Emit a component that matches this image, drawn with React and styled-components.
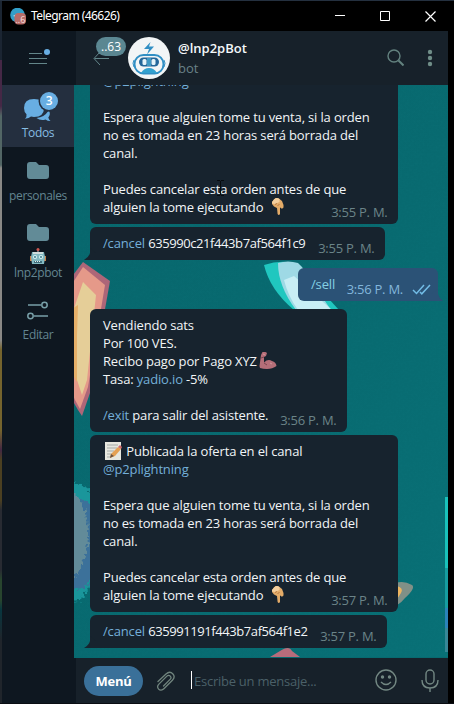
import React from "react";
import styled, { createGlobalStyle } from "styled-components";

const GlobalStyle = createGlobalStyle`
  * { box-sizing: border-box; }
  body { margin: 0; background: #000; font-family: "Open Sans", sans-serif; font-size: 13px; overflow: hidden; }
`;

const Desktop = styled.div`
  width: 454px;
  height: 704px;
  padding: 1px 6px 1px 2px;
  background: linear-gradient(#24303f 0 1px, transparent 1px 703px, #0a0d12 703px),
    linear-gradient(90deg, transparent 2px, #000 2px),
    linear-gradient(#1b2532 0 60px, #452846 60px 106px, #526665 116px 165px, #8a8986 168px 340px, #75642d 350px 430px, #432842 450px, #4b4021 460px 500px, #282b32 510px 570px, #28452e 580px 600px, #08363f 610px, #20252b 640px);
`;
const Window = styled.div`
  width: 446px;
  height: 702px;
  display: flex;
  flex-direction: column;
  background: #0e1720;
`;
const TitleBar = styled.header`
  height: 30px;
  flex: none;
  display: flex;
  align-items: center;
  padding-left: 8px;
  background: #000;
  color: #fff;
`;
const Title = styled.span`
  font: 12px/18px "Noto Sans", sans-serif;
  letter-spacing: -0.55px;
  margin-left: 4px;
  flex: 1;
`;
const WindowButton = styled.span`
  width: 45px;
  display: flex;
  justify-content: center;
  &:last-child { width: 41px; justify-content: flex-start; padding-left: 18px; }
`;
const Body = styled.div`
  flex: 1;
  min-height: 0;
  display: flex;
`;
const Sidebar = styled.nav`
  width: 72px;
  flex: none;
  display: flex;
  flex-direction: column;
`;
const MenuButton = styled.div`
  height: 54px;
  padding: 16px 0 0 26px;
`;
const Folder = styled.div`
  height: ${(p) => p.$height || 62}px;
  display: flex;
  flex-direction: column;
  align-items: center;
  padding-top: ${(p) => p.$top || 13}px;
  background: ${(p) => (p.$active ? "#242f3f" : "transparent")};
  color: ${(p) => (p.$active ? "#86bce2" : "#638590")};
  font-size: 12px;
  line-height: 16px;
  letter-spacing: -0.35px;
`;
const FolderIconBox = styled.span`
  position: relative;
  height: 26px;
  svg { display: block; }
`;
const FolderBadge = styled.span`
  position: absolute;
  top: -7px;
  left: 16px;
  width: 18px;
  height: 18px;
  border-radius: 9px;
  background: #68aee2;
  box-shadow: 0 0 0 1.5px #242f3f;
  color: #fff;
  font: 600 12px/18px "Open Sans", sans-serif;
  text-align: center;
`;
const EmojiLine = styled.span`
  height: 16px;
  margin-top: -2px;
  margin-bottom: 1px;
  svg { display: block; }
`;
const Chat = styled.main`
  flex: 1;
  min-width: 0;
  display: flex;
  flex-direction: column;
`;
const ChatHeader = styled.div`
  height: 54px;
  margin-left: 2px;
  flex: none;
  display: flex;
  align-items: center;
  background: #17212a;
`;
const Back = styled.div`
  position: relative;
  width: 52px;
  height: 54px;
  padding: 20px 0 0 17px;
`;
const UnreadPill = styled.span`
  position: absolute;
  top: 6px;
  left: 20px;
  width: 30px;
  height: 19px;
  border-radius: 10px;
  background: #5b8792;
  color: #fff;
  font: 12px/19px "Open Sans", sans-serif;
  text-align: center;
`;
const Peer = styled.div`
  flex: 1;
  margin-left: 8px;
  padding-bottom: 1px;
`;
const PeerName = styled.div`
  color: #f4f8fa;
  font-weight: 600;
  line-height: 20px;
`;
const PeerStatus = styled.div`
  color: #6a8288;
  line-height: 20px;
`;
const HeaderActions = styled.div`
  display: flex;
  align-items: center;
  gap: 23px;
  padding: 0 15px 1px 0;
`;
const History = styled.section`
  position: relative;
  isolation: isolate;
  flex: 1;
  min-height: 0;
  overflow: hidden;
  display: flex;
  flex-direction: column;
  justify-content: flex-end;
  align-items: flex-start;
  padding: 0 10px 10px 16px;
  background: #076a70;
`;
const Wallpaper = styled.svg`
  position: absolute;
  inset: 0;
  z-index: -1;
`;
const Bubble = styled.article`
  position: relative;
  flex: none;
  width: ${(p) => p.$width}px;
  margin-top: ${(p) => p.$gap || 3}px;
  align-self: ${(p) => (p.$out ? "flex-end" : "flex-start")};
  padding: 7px 13px 8px;
  border-radius: 6px;
  background: ${(p) => (p.$out ? "#2b5276" : "#17232e")};
  color: ${(p) => (p.$out ? "#83d0e4" : "#f2f5f7")};
`;
const Line = styled.div`
  height: 18px;
  line-height: 18px;
  white-space: pre;
  letter-spacing: -0.15px;
  svg { vertical-align: top; }
`;
const Link = styled.span`
  color: #74afd9;
`;
const OrderId = styled.span`
  letter-spacing: -0.42px;
`;
const Time = styled.time`
  position: absolute;
  right: ${(p) => (p.$out ? 35 : 10.5)}px;
  bottom: 3px;
  line-height: 18px;
  letter-spacing: -0.25px;
  color: ${(p) => (p.$out ? "#83b7dc" : "#6b8488")};
  white-space: pre;
`;
const Tail = styled.svg`
  position: absolute;
  bottom: 0;
  ${(p) => (p.$out ? "right: -5px;" : "left: -6px;")}
`;
const Checks = styled.svg`
  position: absolute;
  right: 7px;
  bottom: 6px;
`;
const Composer = styled.footer`
  height: 45px;
  flex: none;
  margin-left: 2px;
  display: flex;
  align-items: center;
  padding: 1px 8px 0 8px;
  background: #17212a;
`;
const MenuPill = styled.button`
  width: 59px;
  height: 30px;
  border: 0;
  border-radius: 15px;
  padding: 0;
  background: #3a7099;
  color: #fff;
  font: 700 13px/28px "Open Sans", sans-serif;
  letter-spacing: -0.3px;
`;
const Attach = styled.span`
  display: flex;
  margin: 2px 0 0 12px;
`;
const Input = styled.div`
  flex: 1;
  display: flex;
  align-items: center;
  margin-left: 15px;
  color: #4b6068;
  letter-spacing: -0.25px;
  white-space: nowrap;
`;
const Caret = styled.span`
  width: 1px;
  height: 18px;
  background: #fff;
  margin: 0 2px 2px 0;
`;
const ComposerActions = styled.span`
  display: flex;
  gap: 23px;
`;
const EmojiSlot = styled.span`
  display: inline-block;
  height: 18px;
  margin-left: ${(p) => p.$gap}px;
`;

const PointDown = () => (
  <svg width="18" height="18" viewBox="0 0 18 18">
    <path d="M3 1.500q2.500-2.500 5.500-.5l2.500 2 1.500 4v2.500q-1.500 2-2.500 .5l-1-.5v6.500q-1.200 2-2.400 0L6 10 3 8.500 1 6V4z" fill="#e3ab68" />
    <path d="M3 1.500q2.500-2.500 5.500-.5v3L4 6 1 5.500V4z" fill="#f4cf9e" />
    <path d="M4 6.500l2-1M6.500 8l2-2" stroke="#b57843" fill="none" />
  </svg>
);
const Biceps = () => (
  <svg width="18" height="18" viewBox="0 0 18 18">
    <path d="M3.500 0q3.500-.5 4.500 1L7 4 5 5v5.500q4-4 8-1.500 4 1 4.500 5-4 3-9.500 3-4 0-7-1L.5 14 2 3z" fill="#b56e78" />
    <path d="M2 6l3-1M5 11l3 2" stroke="#7b4550" fill="none" />
    <path d="M4 2l2 1M11 11l2 1" stroke="#d2959a" fill="none" />
  </svg>
);
const Memo = () => (
  <svg width="20" height="18" viewBox="0 0 20 18">
    <path d="M2 0h16v18H2z" fill="#e6e7df" />
    <path d="M4 3h11M4 6h10M4 9h7M4 12h5M4 15h4" stroke="#a5aaa7" fill="none" />
    <path d="M8 12l7-7 3 2-6 7-5 2z" fill="#e5a153" />
    <path d="M15 5l2-2 2 2-1 2z" fill="#cf6969" />
    <path d="M8 12l3 2-4 2z" fill="#6c5442" />
  </svg>
);
const Robot = () => (
  <svg width="16" height="16" viewBox="0 0 16 16">
    <path d="M8 2v3" stroke="#c0c8cc" />
    <circle cx="8" cy="1.5" r="1.5" fill="#cf5750" />
    <path d="M0 8h2v5H0zM14 8h2v5h-2z" fill="#c8814b" />
    <path d="M2 4h12l1 5-1 7H2L1 9z" fill="#83b9c1" />
    <path d="M3 4h10v2H3z" fill="#cfdddd" />
    <circle cx="5" cy="9" r="2" fill="#d9f6f5" /><circle cx="11" cy="9" r="2" fill="#d9f6f5" />
    <circle cx="5" cy="9" r=".9" fill="#326d80" /><circle cx="11" cy="9" r=".9" fill="#326d80" />
    <path d="M4 13h8v2H4z" fill="#416f7c" /><path d="M5 13.5h1m1 0h1m1 0h1" stroke="#e8eeee" />
  </svg>
);
const AppIcon = () => (
  <svg width="17" height="17" viewBox="0 0 17 17">
    <circle cx="7.5" cy="7" r="7.3" fill="#329ec8" />
    <path d="M3 8l4-2v3" fill="#e6f4fa" />
    <rect x="4.500" y="5" width="11.500" height="11.500" rx="4" fill="#b66c69" />
    <text x="5.500" y="14.5" fontSize="9" fill="#f4dede" fontFamily="Open Sans, sans-serif">..6</text>
  </svg>
);
const BotAvatar = () => (
  <svg width="42" height="42" viewBox="0 0 42 42">
    <circle cx="21" cy="21" r="21" fill="#f2f5f6" />
    <path d="M22.500 5L16 12h5l-2 5.500 7-8h-5z" fill="#318fc4" />
    <rect x="6.5" y="18" width="29" height="18.500" rx="9" fill="#f2f5f6" stroke="#318fc4" strokeWidth="2" />
    <path d="M6 23q-2 3 0 7M36 23q2 3 0 7" stroke="#318fc4" fill="none" />
    <rect x="11" y="20.5" width="20" height="9" rx="4.5" fill="#24679a" />
    <rect x="14.500" y="22" width="4" height="6" rx="1.5" fill="#e4f4fa" /><rect x="23.500" y="22" width="4" height="6" rx="1.5" fill="#e4f4fa" />
    <path d="M19 21h4v8h-4z" fill="#3e98c3" />
    <path d="M13 36q3-5 8-5t8 5z" fill="#32a1cf" />
  </svg>
);
const FolderIcon = () => (
  <svg width="22" height="18" viewBox="0 0 22 18"><path d="M3 0h6l3 3h7q3 0 3 3v8q0 3-3 3H3q-3 0-3-3V3q0-3 3-3z" fill="#628b97" /></svg>
);

const Message = ({ width, time, gap, out, tail, children }) => (
  <Bubble $width={width} $gap={gap} $out={out}>
    {children}
    <Time $out={out}>{time}</Time>
    {tail && (
      <Tail $out={out} width="12" height="12" viewBox="0 0 12 12">
        <path d={out ? "M7 0v5q1 4 5 7H0V5z" : "M6 0v5q-1 4-6 7h12V5z"} fill={out ? "#2b5276" : "#17232e"} />
      </Tail>
    )}
    {out && (
      <Checks width="19" height="12" viewBox="0 0 19 12">
        <path d="M1 7l3.5 3.5L12 2M8 9l1.8 1.8L18 2" fill="none" stroke="#72bce6" strokeWidth="1.5" />
      </Checks>
    )}
  </Bubble>
);
const OfferMessage = ({ time, continued }) => (
  <Message width={308} time={time}>
    {!continued && <Line><Memo /> Publicada la oferta en el canal</Line>}
    <Line><Link>@p2plightning</Link></Line>
    <Line />
    <Line>Espera que alguien tome tu venta, si la orden</Line>
    <Line>no es tomada en 23 horas será borrada del</Line>
    <Line>canal.</Line>
    <Line />
    <Line>Puedes cancelar esta orden antes de que</Line>
    <Line>alguien la tome ejecutando<EmojiSlot $gap={8}><PointDown /></EmojiSlot></Line>
  </Message>
);
const MouseCursor = styled.svg`
  position: absolute;
  left: 143px;
  top: 95px;
`;

const ChatWallpaper = () => (
  <Wallpaper width="374" height="572" viewBox="0 0 374 572">
    <defs>
      <linearGradient id="sea" x1="0" y1="0" x2="1" y2="1">
        <stop stopColor="#07666c" /><stop offset=".55" stopColor="#086a70" /><stop offset="1" stopColor="#087076" />
      </linearGradient>
      <filter id="grain"><feTurbulence type="fractalNoise" baseFrequency=".45" numOctaves="2" /><feColorMatrix values="0 0 0 0 .02 0 0 0 0 .3 0 0 0 0 .33 0 .8 0 0 -.25" /></filter>
      <filter id="ragged" colorInterpolationFilters="sRGB"><feTurbulence type="fractalNoise" baseFrequency=".35" numOctaves="1" /><feDisplacementMap in="SourceGraphic" scale="10" xChannelSelector="R" yChannelSelector="G" /></filter>
      <filter id="soft"><feGaussianBlur stdDeviation=".7" /></filter>
    </defs>
    <path d="M0 0h374v572H0z" fill="url(#sea)" />
    <path d="M0 0h374v572H0z" filter="url(#grain)" opacity=".12" />
    <g filter="url(#soft)">
      <path d="M-4 194l13-17 27 19-3 17-17 95-8 23-4-6-8-14z" fill="#ad6678" />
      <path d="M-4 202l13-20 22 18-17 102-8 22-5-9-5-12z" fill="#e59989" />
      <path d="M-4 235l13-38 13 13-9 85-5 15-5-15-6-16z" fill="#e5ce98" />
      <path d="M-4 225l8-5-1 30v47l-7-12z" fill="#e5af67" />
    </g>
    <path d="M190 180q18-6 33-1l42 46h-45q-24-20-30-45z" fill="#20c7bf" />
    <path d="M204 178q10-3 20 0l4 4 29 43h-35q-18-24-18-47z" fill="#9ed9e5" />
    <path d="M210 195l10-4 38 34h-34q-10-14-14-30z" fill="#c8eef5" />
    <g filter="url(#ragged)">
      <path d="M-15 394q20 1 33 14v90l-12 18-21 2z" fill="#1a969b" />
      <path d="M-15 410h12l26 11v66l-12 16-26 3z" fill="#3c719a" />
      <path d="M-15 410h16q12 10 13 35t-10 42l-6 6h-13z" fill="#628b99" />
    </g>
    <path d="M315 502q11-9 23-2 4 3-7 13-8 10-16 8z" fill="#819087" />
    <path d="M315 505l8-4q7 2 4 7-5 9-12 11z" fill="#edb45f" />
    <path d="M196 572l10-6q9-6 12 0l8 6z" fill="#b76c7b" />
    <path d="M371 412h3v155h-3z" fill="#19c2bb" />
    <path d="M371 483h3v60h-3z" fill="#169da0" />
    <path d="M371 523h3v20h-3z" fill="#2b83b9" />
    <path d="M371 543h3v24h-3z" fill="#378797" />
  </Wallpaper>
);

export default function App() {
  return (
    <>
      <GlobalStyle />
      <Desktop>
        <Window>
          <TitleBar>
            <AppIcon />
            <Title>Telegram (46626)</Title>
            <WindowButton><svg width="10" height="10"><path d="M0 4.5h10" stroke="#fff" /></svg></WindowButton>
            <WindowButton><svg width="10" height="10"><path d="M.5.5h9v9h-9z" stroke="#fff" fill="none" /></svg></WindowButton>
            <WindowButton><svg width="11" height="11"><path d="M.5.5l10 10M10.5.5l-10 10" stroke="#fff" strokeWidth="1.2" /></svg></WindowButton>
          </TitleBar>
          <Body>
            <Sidebar>
              <MenuButton>
                <svg width="24" height="18" viewBox="0 0 24 18"><path d="M1 6.5h13M1 11.5h18M1 16.5h18" stroke="#63868a" /><circle cx="19" cy="5" r="3" fill="#68aee2" /></svg>
              </MenuButton>
              <Folder $active $top={14}>
                <FolderIconBox>
                  <svg width="28" height="23" viewBox="0 0 28 23">
                    <path d="M10 0q10 0 10 9t-10 9l-3-.4q-2 2-6 2.1 2-2 1.5-4.4Q0 13 0 9q0-9 10-9z" fill="#68aee2" />
                    <path d="M25 12q2 3-.7 6.500q.5 2 2.200 3.500-3 0-5-1.500-5 1.500-9-1.500 8-1 11-6z" fill="#68aee2" />
                  </svg>
                  <FolderBadge>3</FolderBadge>
                </FolderIconBox>
                Todos
              </Folder>
              <Folder $top={15}><FolderIconBox><FolderIcon /></FolderIconBox>personales</Folder>
              <Folder $height={78} $top={15}><FolderIconBox><FolderIcon /></FolderIconBox><EmojiLine><Robot /></EmojiLine>lnp2pbot</Folder>
              <Folder $top={14}>
                <FolderIconBox>
                  <svg width="22" height="19" viewBox="0 0 22 19" fill="none" stroke="#78a0a8" strokeWidth="1.5"><path d="M1 4h13M7 15h14" /><circle cx="17.500" cy="4" r="2.700" /><circle cx="3.500" cy="15" r="2.700" /></svg>
                </FolderIconBox>
                Editar
              </Folder>
            </Sidebar>
            <Chat>
              <ChatHeader>
                <Back>
                  <svg width="17" height="15" viewBox="0 0 17 15"><path d="M7 1L1 7.500 7 14M1.500 7.500H16" fill="none" stroke="#63868a" /></svg>
                  <UnreadPill>..63</UnreadPill>
                </Back>
                <BotAvatar />
                <Peer><PeerName>@lnp2pBot</PeerName><PeerStatus>bot</PeerStatus></Peer>
                <HeaderActions>
                  <svg width="17" height="17" viewBox="0 0 17 17" fill="none" stroke="#63827f" strokeWidth="1.400"><circle cx="7" cy="7" r="6" /><path d="M11.500 11.500l5 5" strokeWidth="2" /></svg>
                  <svg width="6" height="18" viewBox="0 0 6 18" fill="#708e88"><circle cx="3" cy="3" r="2.200" /><circle cx="3" cy="9" r="2.200" /><circle cx="3" cy="15" r="2.200" /></svg>
                </HeaderActions>
              </ChatHeader>
              <History>
                <ChatWallpaper />
                <OfferMessage time="3:55 P. M." continued />
                <Message width={295} time="3:55 P. M." tail><Line><Link>/cancel</Link> <OrderId>635990c21f443b7af564f1c9</OrderId></Line></Message>
                <Message width={140} time="3:56 P. M." gap={8} out tail><Line>/sell</Line></Message>
                <Message width={257} time="3:56 P. M." gap={8}>
                  <Line>Vendiendo sats</Line>
                  <Line>Por 100 VES.</Line>
                  <Line>Recibo pago por Pago XYZ<EmojiSlot $gap={2}><Biceps /></EmojiSlot></Line>
                  <Line>Tasa: <Link>yadio.io</Link> -5%</Line>
                  <Line />
                  <Line><Link>/exit</Link> para salir del asistente.</Line>
                </Message>
                <OfferMessage time="3:57 P. M." />
                <Message width={297} time="3:57 P. M." tail><Line><Link>/cancel</Link> <OrderId>635991191f443b7af564f1e2</OrderId></Line></Message>
                <MouseCursor width="7" height="16" viewBox="0 0 7 16"><path d="M0 .5h3M4 .5h3M3.500 1v14M0 15.500h3M4 15.500h3" stroke="#070b0e" fill="none" /></MouseCursor>
              </History>
              <Composer>
                <MenuPill>Menú</MenuPill>
                <Attach>
                  <svg width="21" height="22" viewBox="0 0 21 22" fill="none" stroke="#71857e" strokeWidth="1.300" strokeLinecap="round" strokeLinejoin="round"><path d="M3 10.500l8-7.500c2.300-2 5-2 6.700-.2s1.700 4.500-.3 6.500l-8.500 8.500c-1.700 1.700-4 1.700-5.300.3s-1.200-3.400.3-5l8-8c1-1 2.500-1 3.400 0s.8 2.300-.2 3.300L8.500 15" /></svg>
                </Attach>
                <Input><Caret />Escribe un mensaje...</Input>
                <ComposerActions>
                  <svg width="22" height="22" viewBox="0 0 22 22" fill="none" stroke="#738883" strokeWidth="1.400"><circle cx="11" cy="11" r="10" /><path d="M6 13q5 5 10 0" /><circle cx="7.500" cy="8" r="1" fill="#738883" /><circle cx="14.500" cy="8" r="1" fill="#738883" /></svg>
                  <svg width="20" height="24" viewBox="0 0 20 24" fill="none" stroke="#738883" strokeWidth="1.400"><rect x="6" y="1" width="8" height="14" rx="4" /><path d="M2 11q0 8 8 8t8-8M10 19v4" /></svg>
                </ComposerActions>
              </Composer>
            </Chat>
          </Body>
        </Window>
      </Desktop>
    </>
  );
}
